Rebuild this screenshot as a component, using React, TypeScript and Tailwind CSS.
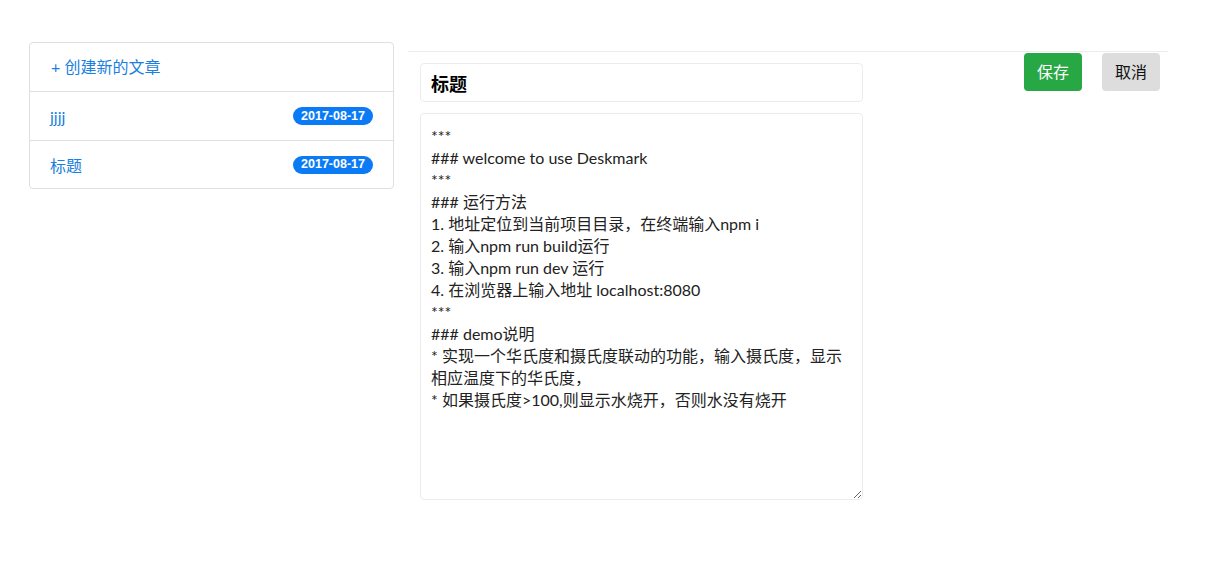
import { useState } from "react";

const posts = [
  { id: 1, title: "jjjj", date: "2017-08-17" },
  { id: 2, title: "标题", date: "2017-08-17" },
];

const initialBody = `***
### welcome to use Deskmark
***
### 运行方法
1. 地址定位到当前项目目录，在终端输入npm i
2. 输入npm run build运行
3. 输入npm run dev 运行
4. 在浏览器上输入地址 localhost:8080
***
### demo说明
* 实现一个华氏度和摄氏度联动的功能，输入摄氏度，显示相应温度下的华氏度，
* 如果摄氏度>100,则显示水烧开，否则水没有烧开`;

export default function App() {
  const [title, setTitle] = useState("标题");
  const [body, setBody] = useState(initialBody);

  return (
    <div
      className="min-h-screen bg-white text-[#212529]"
      style={{ fontFamily: 'Lato, "Noto Sans CJK SC", sans-serif' }}
    >
      <div className="flex pt-[42px] pl-[29px] pr-[50px]">
        {/* Sidebar list */}
        <div className="w-[365px] shrink-0">
          <div className="border border-[#dfdfdf] rounded-[4px] bg-white">
            <div className="h-[49px] flex items-center pl-[21px] text-[16px] text-[#1a7fe0] border-b border-[#dfdfdf] cursor-pointer">
              + 创建新的文章
            </div>
            {posts.map((p, i) => (
              <div
                key={p.id}
                className={
                  "flex items-center justify-between pl-[20px] pr-[20px] cursor-pointer " +
                  (i < posts.length - 1 ? "h-[49px] border-b border-[#dfdfdf]" : "h-[47px]")
                }
              >
                <span className="text-[16px] text-[#1a7fe0] pt-[2px]">{p.title}</span>
                <span
                  className="h-[18px] px-[8px] flex items-center rounded-full bg-[#0b7bf5] text-white text-[12.5px] font-bold"
                  style={{ fontFamily: '"Liberation Sans", Arial, sans-serif' }}
                >
                  {p.date}
                </span>
              </div>
            ))}
          </div>
        </div>

        {/* Editor */}
        <div className="ml-[14px] flex-1 border-t border-[#ececec] mt-[9px] flex">
          <div className="ml-[12px] w-[443px] pt-[11px]">
            <input
              value={title}
              onChange={(e) => setTitle(e.target.value)}
              className="w-full h-[39px] border border-[#ececec] rounded-[4px] px-[10px] text-[18px] font-bold text-black outline-none"
            />
            <textarea
              value={body}
              onChange={(e) => setBody(e.target.value)}
              className="mt-[11px] w-full h-[387px] border border-[#ececec] rounded-[4px] px-[10px] pt-[11px] text-[16px] leading-[22px] text-[#222] outline-none resize-y"
            />
          </div>
          <div className="ml-auto flex gap-[20px] pr-[8px] pt-[1px]">
            <button className="w-[58px] h-[38px] rounded-[4px] bg-[#28a745] text-white text-[16px]">
              保存
            </button>
            <button className="w-[58px] h-[38px] rounded-[4px] bg-[#dddddd] text-[#111] text-[16px]">
              取消
            </button>
          </div>
        </div>
      </div>
    </div>
  );
}
